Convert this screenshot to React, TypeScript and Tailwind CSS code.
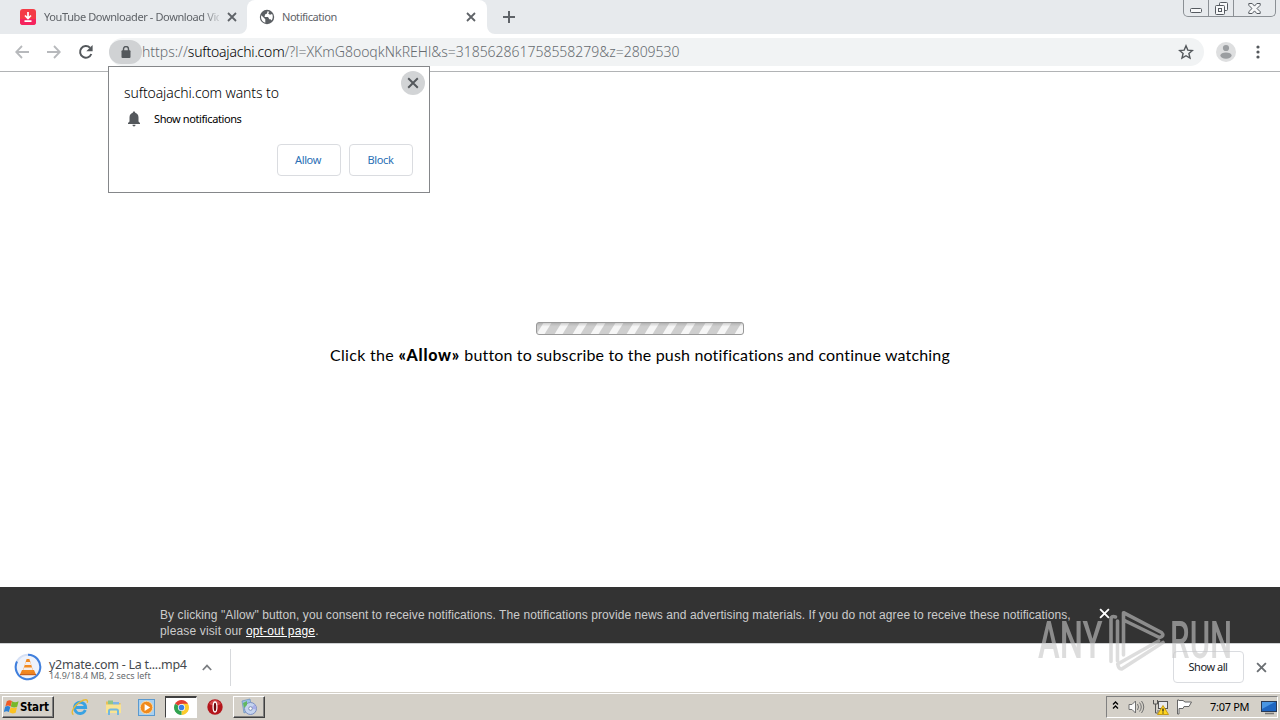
import type { ReactNode } from "react";

// ─── Shared glyphs ─────────────────────────────────────────────────────────────
function Cross({ size, color, width = 2 }: { size: number; color: string; width?: number }) {
  return (
    <svg width={size} height={size} viewBox="0 0 10 10" className="shrink-0">
      <path d="M1 1l8 8M9 1l-8 8" stroke={color} strokeWidth={width} fill="none" />
    </svg>
  );
}

function GlobeIcon() {
  return (
    <svg width="16" height="16" viewBox="0 0 16 16" className="shrink-0">
      <circle cx="8" cy="8" r="7.2" fill="#5b5f63" />
      <path d="M2.3 6.2l4 4v3.5C3.8 13 2 11 2 8zM8.5 2.3L8 4.5 6 5.5 5.6 8H9l1.3 2.2h1.3l.9 1.2c1.5-1.9 1.7-4.3.6-6.4L11 5.8 9.2 4.5l1-1.7z" fill="#fff" />
    </svg>
  );
}

// ─── Tab strip ─────────────────────────────────────────────────────────────────
function TabStrip() {
  return (
    <div className="relative flex h-[34px] bg-[#e7eaed] text-[#5f6368]">
      <div className="flex h-[34px] w-[247px] items-center pl-5">
        <svg width="16" height="16" viewBox="0 0 16 16" className="shrink-0">
          <rect width="16" height="16" rx="3" fill="#f43b46" />
          <path d="M0 10h16v3a3 3 0 0 1-3 3H3a3 3 0 0 1-3-3z" fill="#f5235e" />
          <path d="M8 3v6M5 6.5L8 9.5l3-3M4.5 12.2h7" stroke="#fff" strokeWidth="1.7" fill="none" />
        </svg>
        <span className="ml-[8px] w-[175px] overflow-hidden whitespace-nowrap text-[11px] tracking-[-0.39px] [mask-image:linear-gradient(to_right,black_90%,transparent_103%)]">
          YouTube Downloader - Download Vic
        </span>
        <span className="ml-2"><Cross size={10} color="#5f6368" width={1.8} /></span>
      </div>
      <div className="relative flex h-[34px] w-[240px] items-center rounded-t-lg bg-white pl-3">
        <svg width="8" height="8" className="absolute bottom-0 -left-2"><path d="M8 0v8H0a8 8 0 0 0 8-8" fill="#fff" /></svg>
        <svg width="8" height="8" className="absolute -right-2 bottom-0"><path d="M0 0v8h8a8 8 0 0 1-8-8" fill="#fff" /></svg>
        <GlobeIcon />
        <span className="ml-[7px] w-[184px] text-[11px] tracking-[-0.45px]">Notification</span>
        <Cross size={10} color="#5f6368" width={1.8} />
      </div>
      <svg width="12" height="12" viewBox="0 0 12 12" className="mt-[11px] ml-4"><path d="M6 0v12M0 6h12" stroke="#5f6368" strokeWidth="2" /></svg>
      <div className="ml-auto mr-1 flex h-[17px] w-[93px] rounded-b-[5px] border border-t-0 border-[#8b9095] text-[#555a60]">
        <div className="flex w-[25px] justify-center border-r border-[#8b9095] pt-2">
          <svg width="12" height="5"><rect x=".5" y=".5" width="11" height="4" rx="1" fill="#f7f8f9" stroke="currentColor" /></svg>
        </div>
        <div className="flex w-[25px] justify-center border-r border-[#8b9095] pt-[2px]">
          <svg width="13" height="13" fill="#f7f8f9" stroke="currentColor"><rect x="4.5" y=".5" width="8" height="8" rx="1" /><rect x=".5" y="3.5" width="9" height="9" rx="1" /><rect x="3.5" y="6.5" width="3" height="3" /></svg>
        </div>
        <div className="flex flex-1 justify-center pt-[3px]">
          <svg width="13" height="11" fill="#f7f8f9" stroke="currentColor"><path d="M.8.5h3.4l2.3 2.6L8.8.5h3.4v1.8L9 5.5l3.2 3.2v1.8H8.8L6.5 7.9 4.2 10.5H.8V8.7L4 5.5.8 2.3z" /></svg>
        </div>
      </div>
    </div>
  );
}

// ─── Toolbar ───────────────────────────────────────────────────────────────────
function Toolbar() {
  return (
    <div className="flex h-[38px] items-center border-b border-[#b1b3b5] bg-white pb-px pl-[15px]">
      <svg width="14" height="14" viewBox="0 0 14 14" fill="none" stroke="#b7b9bc" strokeWidth="1.8"><path d="M14 7H1.5M7 1L1.2 7 7 13" /></svg>
      <svg width="14" height="14" viewBox="0 0 14 14" fill="none" stroke="#b7b9bc" strokeWidth="1.8" className="ml-[18px]"><path d="M0 7h12.5M7 1l5.8 6L7 13" /></svg>
      <svg width="16" height="16" viewBox="0 0 16 16" className="ml-[17px]">
        <path d="M13.3 10A5.8 5.8 0 1 1 12 3.8" fill="none" stroke="#54585c" strokeWidth="2" />
        <path d="M14.6 1v6.3H8.3z" fill="#54585c" />
      </svg>
      <div className="ml-[15px] flex h-7 w-[1095px] items-center rounded-full bg-[#f1f3f4]">
        <div className="flex h-6 w-[33px] shrink-0 items-center justify-center rounded-full bg-[#d0d2d4]">
          <svg width="10" height="12" viewBox="0 0 10 12"><path d="M2.5 5V3a2.5 2.5 0 0 1 5 0v2" fill="none" stroke="#54585c" strokeWidth="1.4" /><rect x=".5" y="4.3" width="9" height="7.7" rx="1" fill="#54585c" /></svg>
        </div>
        <span className="-mt-px whitespace-nowrap text-[14px] font-light tracking-[-0.02px] text-[#666b70]">
          https://<span className="tracking-[-0.2px] text-black">suftoajachi.com</span>/?l=XKmG8ooqkNkREHl&amp;s=318562861758558279&amp;z=2809530
        </span>
        <svg width="16" height="16" viewBox="0 0 16 16" className="mr-[10px] ml-auto">
          <path d="M8 1.8l1.8 4.3 4.6.4-3.5 3 1.1 4.6L8 11.7l-4 2.4 1.1-4.6-3.5-3 4.6-.4z" fill="none" stroke="#54585c" strokeWidth="1.4" />
        </svg>
      </div>
      <svg width="20" height="20" viewBox="0 0 20 20" className="ml-[12px]">
        <circle cx="10" cy="10" r="10" fill="#dedfe0" />
        <circle cx="10" cy="6" r="3.1" fill="#9b9ea1" />
        <ellipse cx="10" cy="13.6" rx="5.6" ry="3.2" fill="#9b9ea1" />
      </svg>
      <svg width="4" height="14" className="ml-[20px]" fill="#54585c"><circle cx="2" cy="2" r="1.6" /><circle cx="2" cy="7" r="1.6" /><circle cx="2" cy="12" r="1.6" /></svg>
    </div>
  );
}

// ─── Permission bubble ─────────────────────────────────────────────────────────
function PermissionBubble() {
  return (
    <div className="absolute top-[66px] left-[108px] flex h-[127px] w-[322px] flex-col border border-[#85878a] bg-white pl-[15px]">
      <div className="flex h-[37px] items-start justify-between pr-1">
        <span className="mt-[16px] text-[14px] leading-5 font-light tracking-[-0.11px] whitespace-nowrap text-black">suftoajachi.com wants to</span>
        <div className="mt-1 flex size-6 items-center justify-center rounded-full bg-[#d2d4d6]"><Cross size={12} color="#54585c" width={1.6} /></div>
      </div>
      <div className="mt-[7px] flex h-4 items-center">
        <svg width="14" height="16" viewBox="0 0 14 16" className="ml-[3px]"><path d="M7 .5c.8 0 1.2.5 1.2 1.3C10.4 2.4 11.5 4.2 11.5 6.5v4L13 12v1H1v-1l1.5-1.5v-4c0-2.3 1.1-4.1 3.3-4.7C5.8 1 6.2.5 7 .5M5.5 13.8h3c0 1-.6 1.6-1.5 1.6s-1.5-.6-1.5-1.6" fill="#54585c" /></svg>
        <span className="ml-[13px] text-[11px] tracking-[-0.4px] whitespace-nowrap text-black">Show notifications</span>
      </div>
      <div className="mt-[17px] flex gap-2 pl-[153px] text-[11px] tracking-[-0.4px] text-[#2a6fb5]">
        <button className="h-8 w-16 rounded border border-[#dadce0] pr-[2px]">Allow</button>
        <button className="h-8 w-16 rounded border border-[#dadce0] pr-[1px]">Block</button>
      </div>
    </div>
  );
}

// ─── Web page ──────────────────────────────────────────────────────────────────
function PageBody() {
  return (
    <main className="flex h-[515px] flex-col items-center bg-white pt-[250px]">
      <svg width="208" height="13" viewBox="0 0 208 13">
        <defs>
          <pattern id="stripes" width="18" height="13" patternUnits="userSpaceOnUse">
            <rect width="18" height="13" fill="#cecece" />
            <path d="M8 0h8L8 13H0z" fill="#f6f6f6" />
          </pattern>
          <linearGradient id="shade" x1="0" y1="0" x2="0" y2="1">
            <stop offset="0" stopColor="#777" stopOpacity=".4" />
            <stop offset=".35" stopColor="#999" stopOpacity="0" />
          </linearGradient>
        </defs>
        <rect x=".5" y=".5" width="207" height="12" rx="2.5" fill="url(#stripes)" />
        <rect x=".5" y=".5" width="207" height="12" rx="2.5" fill="url(#shade)" stroke="#999" />
      </svg>
      <p className="mt-[8px] font-['Lato','Open_Sans',sans-serif] text-[16px] leading-6 tracking-[0.17px] whitespace-nowrap text-black">
        <span className="tracking-[0.3px]">Click the </span>
        <b className="font-black tracking-[0.75px]">«Allow»</b> button to subscribe to the push notifications and continue watching
      </p>
    </main>
  );
}

function ConsentBar() {
  return (
    <div className="flex h-14 items-start bg-[#333] pl-40 font-['Liberation_Sans',sans-serif] text-[12px] leading-4 text-[#ccc]">
      <p className="mt-5 w-[939px] tracking-[0.08px] whitespace-nowrap">
        By clicking "Allow" button, you consent to receive notifications. The notifications provide news and advertising materials. If you do not agree to receive these notifications,
        <br />
        <span className="tracking-[0.15px]">please visit our <span className="text-white underline">opt-out page</span>.</span>
      </p>
      <span className="mt-[21px]"><Cross size={11} color="#fff" width={1.7} /></span>
    </div>
  );
}

// ─── Downloads ─────────────────────────────────────────────────────────────────
function DownloadShelf() {
  return (
    <div className="flex h-[49px] items-center border-t border-[#cfd1d3] bg-white pb-[2px]">
      <svg width="28" height="28" viewBox="0 0 28 28" className="ml-[14px] shrink-0">
        <circle cx="14" cy="14" r="12.3" fill="#eef2fb" stroke="#d5e0f5" strokeWidth="2" />
        <path d="M14 1.7A12.3 12.3 0 1 1 3 8.5" fill="none" stroke="#3f7fdd" strokeWidth="2" />
        <path d="M8 17h12l2 4.5H6z" fill="#ee8321" />
        <path d="M12.6 6h2.8l4 12.5q-5.4 2-10.8 0z" fill="#f28a21" />
        <path d="M11.7 9h4.6l.9 3h-6.4zM10 14.5h8l.8 2.6H9.2z" fill="#f3eeee" />
        <path d="M6 21h16v1.2H6z" fill="#c9611c" />
      </svg>
      <div className="mt-[4px] ml-[7px] w-[144px] whitespace-nowrap">
        <div className="text-[12.5px] leading-[13px] tracking-[-0.27px] text-[#45494d]">y2mate.com - La t....mp4</div>
        <div className="text-[9px] leading-[9px] text-[#686c70]">14.9/18.4 MB, 2 secs left</div>
      </div>
      <svg width="10" height="7" className="ml-[9px]"><path d="M.8 6L5 1.6 9.2 6" fill="none" stroke="#7b7e82" strokeWidth="1.7" /></svg>
      <div className="ml-[18px] h-[37px] w-px bg-[#d7d9dc]" />
      <button className="mr-[12px] ml-auto h-8 w-[71px] rounded border border-[#dadce0] pr-px text-[11px] tracking-[-0.45px] text-[#202124]">Show all</button>
      <span className="mr-[13px]"><Cross size={11} color="#6b6f73" width={1.7} /></span>
    </div>
  );
}

// ─── Taskbar icons ─────────────────────────────────────────────────────────────
function WindowsFlag() {
  return (
    <svg width="16" height="16" viewBox="0 0 17 16" className="shrink-0">
      <path d="M3 2q3-2 5.500-.2L7 7.400Q4.400 5.600 1.500 7.300z" fill="#ef5b27" />
      <path d="M8.600 2q3 1.800 6.900 0L14 7.700q-3.500 1.700-6.700-.3z" fill="#77b82a" />
      <path d="M1.200 7.800Q4 6.100 6.700 7.900L5.200 13.400Q2.800 11.800-.2 13.400z" fill="#2e82d5" />
      <path d="M7.100 8.300q3 1.700 6.700 0L12.400 14q-3.500 1.800-6.700-.3z" fill="#fbc221" />
    </svg>
  );
}

function IeIcon() {
  return (
    <svg width="18" height="18" viewBox="0 0 18 18" fill="none">
      <path d="M14.3 12A5.6 5.6 0 1 1 14.7 9.5H5" stroke="#39a2e2" strokeWidth="2.8" />
      <path d="M2.5 16.5C-1 15 3 7.500 9 4c4.500-3 8.500-3.200 7.300.8" stroke="#e9bb35" strokeWidth="1.4" />
    </svg>
  );
}

function FolderIcon() {
  return (
    <svg width="17" height="17" viewBox="0 0 17 17">
      <path d="M1 2.5h6l1 1.5h7.5v10H1z" fill="#e9bf57" />
      <path d="M3 1.5h5v4H3z" fill="#8cc48a" /><path d="M8 3h6v3H8z" fill="#7db4e4" />
      <path d="M1 5.5h15V14H1z" fill="#f9e391" />
      <path d="M4 16v-4q0-1.5 1.5-1.5h6q1.5 0 1.5 1.5v4" fill="none" stroke="#72b8df" strokeWidth="2" />
    </svg>
  );
}

function PlayerIcon() {
  return (
    <svg width="17" height="17" viewBox="0 0 17 17">
      <rect x=".5" y=".5" width="16" height="16" fill="#a9d0ef" stroke="#5a99cf" />
      <circle cx="8.5" cy="8.5" r="6.3" fill="#f08a1c" stroke="#f9d9a8" />
      <path d="M6.6 5v7l5.6-3.5z" fill="#fff" />
    </svg>
  );
}

function ChromeIcon() {
  return (
    <svg width="15" height="15" viewBox="0 0 16 16">
      <path d="M8 8L1.1 4A8 8 0 0 1 14.9 4z" fill="#e33e32" />
      <path d="M8 8l6.9-4A8 8 0 0 1 8 16z" fill="#fccb2d" />
      <path d="M8 8v8A8 8 0 0 1 1.1 4z" fill="#31a350" />
      <path d="M8 4h6.9L11.5 10 8 16l3.4-6z" fill="#fccb2d" />
      <circle cx="8" cy="8" r="3.8" fill="#fff" /><circle cx="8" cy="8" r="3" fill="#3c7fe5" />
    </svg>
  );
}

function OperaIcon() {
  return (
    <svg width="16" height="16" viewBox="0 0 16 16">
      <circle cx="8" cy="8" r="7.7" fill="#b4151b" />
      <path d="M2 5q6-8 12 0-6 3-12 0" fill="#e05c5c" opacity=".7" />
      <ellipse cx="8" cy="8" rx="1.9" ry="5" fill="#6e080c" stroke="#fff" strokeWidth="1.3" />
    </svg>
  );
}

function InstallerIcon() {
  return (
    <svg width="18" height="18" viewBox="0 0 18 18">
      <path d="M2 3l8-2 2 10-8 4z" fill="#9cc1e6" stroke="#6790bd" strokeWidth=".7" />
      <circle cx="10.5" cy="10.5" r="6" fill="#c5d4ef" stroke="#7c8fc3" />
      <path d="M10.5 10.5l4-4a6 6 0 0 1 1.5 5z" fill="#aab0ea" />
      <circle cx="10.5" cy="10.5" r="1.8" fill="#fff" stroke="#7e8eb5" />
      <path d="M3 5l4-2v4l-3 3z" fill="#61b860" />
    </svg>
  );
}

function TaskButton({ active, children }: { active?: boolean; children: ReactNode }) {
  return active ? (
    <div className="flex h-[22px] w-8 items-center justify-center border border-t-2 border-[#404040] border-r-white border-b-white bg-white">{children}</div>
  ) : (
    <div className="flex h-[22px] w-8 items-center justify-center border border-white border-r-[#404040] border-b-[#404040] bg-[#d4d0c8] shadow-[inset_-1px_-1px_#808080]">{children}</div>
  );
}

function Taskbar() {
  return (
    <div className="flex h-7 items-center border-t border-[#d4d0c8] bg-[#d4d0c8] pt-px shadow-[inset_0_1px_#fff]">
      <div className="ml-[2px] flex h-[22px] w-[52px] items-center border border-white border-r-[#404040] border-b-[#404040] pl-px shadow-[inset_-1px_-1px_#808080]">
        <WindowsFlag />
        <span className="mt-px font-['DejaVu_Sans_Condensed','DejaVu_Sans',sans-serif] text-[11.5px] font-bold tracking-[-0.15px] text-black">Start</span>
      </div>
      <div className="ml-[17px] flex items-center gap-4"><IeIcon /><FolderIcon /><PlayerIcon /></div>
      <div className="ml-[10px] flex items-center">
        <TaskButton active><ChromeIcon /></TaskButton>
        <span className="mx-[10px]"><OperaIcon /></span>
        <TaskButton><InstallerIcon /></TaskButton>
      </div>
      <div className="mr-[2px] ml-auto flex h-[22px] w-[172px] items-center border border-[#808080] border-r-white border-b-white pl-[5px]">
        <svg width="7" height="9" className="-mt-1" fill="none" stroke="#000" strokeWidth="1.3"><path d="M1 3.5L3.5 1 6 3.5M1 7.5L3.5 5 6 7.5" /></svg>
        <svg width="17" height="16" viewBox="0 0 17 16" className="ml-[9px]" fill="#fafafa" stroke="#707070">
          <path d="M1 5.5h3L7.5 2v12L4 10.5H1z" /><path d="M9.5 5q2 3 0 6M11.5 3.5q3.5 4.5 0 9M13.5 2q4.5 6 0 12" fill="none" />
        </svg>
        <svg width="17" height="16" viewBox="0 0 17 16" className="ml-[7px]">
          <path d="M1.5 1v4h4V1M3.5 5v9H7" fill="none" stroke="#555" />
          <rect x="6.5" y="2.5" width="9" height="7" fill="#e7e9ed" stroke="#555" /><path d="M5 11h8v3H5z" fill="#999" />
          <path d="M11 6.5l5.5 9h-11z" fill="#ffd51f" stroke="#c69a15" /><path d="M11 9.5v3M11 13.5v1" stroke="#222" strokeWidth="1.3" />
        </svg>
        <svg width="17" height="16" viewBox="0 0 17 16" className="ml-[7px]" fill="#fff" stroke="#666"><path d="M1.5 1v14h1.500V9.500h4L8 7.500h5L15.500 3H9L7 1.500H3V1z" /></svg>
        <span className="ml-[17px] w-[51px] text-[11px] tracking-[-0.3px] whitespace-nowrap text-black">7:07 PM</span>
        <svg width="16" height="15" viewBox="0 0 16 15"><rect x=".5" y="1.5" width="15" height="10" fill="#1f66c1" stroke="#2a3a55" /><path d="M1 2h13L1 9z" fill="#4a96e3" /><path d="M4 13.5h9" stroke="#777" strokeWidth="1.5" /></svg>
      </div>
    </div>
  );
}

// ─── Watermark ─────────────────────────────────────────────────────────────────
function Watermark() {
  return (
    <div className="pointer-events-none absolute top-[606px] left-[1038px] h-[70px] w-[200px] font-['Roboto',sans-serif] text-[52px] leading-[70px] font-medium text-[#c8c8c8] opacity-60">
      <span className="absolute top-0 left-0 origin-left scale-x-[0.630]">ANY</span>
      <svg width="62" height="70" viewBox="0 0 62 70" className="absolute top-0 left-[69px]" fill="none" stroke="#c8c8c8" strokeWidth="3.6" strokeLinejoin="round" strokeLinecap="round">
        <path d="M4 55.5V13.5Q4 9.5 8.5 11M10.5 15v40" />
        <path d="M16.5 49V6.7L54.5 26.5q3.5 3.5-2 5L18.5 15" />
        <path d="M56 36.5L14.7 63q-3 .5-4-5L51.5 35" />
      </svg>
      <span className="absolute top-0 left-[132px] origin-left scale-x-[0.600]">RUN</span>
    </div>
  );
}

export default function App() {
  return (
    <div className="relative flex h-[720px] w-[1280px] flex-col overflow-hidden bg-white font-['Noto_Sans','Open_Sans',sans-serif]">
      <TabStrip />
      <Toolbar />
      <PageBody />
      <ConsentBar />
      <DownloadShelf />
      <Taskbar />
      <PermissionBubble />
      <Watermark />
    </div>
  );
}
